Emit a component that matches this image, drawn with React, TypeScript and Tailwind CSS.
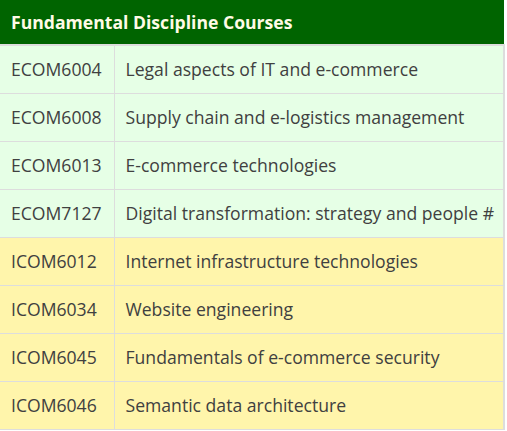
import React from 'react';

const ecom = [
  ['ECOM6004', 'Legal aspects of IT and e-commerce'],
  ['ECOM6008', 'Supply chain and e-logistics management'],
  ['ECOM6013', 'E-commerce technologies'],
  ['ECOM7127', 'Digital transformation: strategy and people #'],
];

const icom = [
  ['ICOM6012', 'Internet infrastructure technologies'],
  ['ICOM6034', 'Website engineering'],
  ['ICOM6045', 'Fundamentals of e-commerce security'],
  ['ICOM6046', 'Semantic data architecture'],
];

const App = () => {
  return (
    <div className="w-[507px] h-[431px] bg-white font-['Open_Sans',sans-serif] text-[#404040]">
      <table className="w-[505px] table-fixed border-collapse">
        <colgroup>
          <col className="w-[114px]" />
          <col />
        </colgroup>
        <thead>
          <tr className="bg-[#006400] border-b-2 border-[#dddddd]">
            <th colSpan={2} className="h-[45px] px-[11px] text-left text-[17.6px] font-bold text-[#fffbe6]">
              Fundamental Discipline Courses
            </th>
          </tr>
        </thead>
        <tbody>
          {ecom.map(([code, name]) => (
            <tr key={code} className="bg-[#e6ffe6] border-b border-r-2 border-[#dddddd]">
              <td className="h-[48px] px-[11px] text-[17.6px] whitespace-nowrap border-r border-[#dddddd]">{code}</td>
              <td className="h-[48px] pl-[11px] pr-0 text-[17.6px] whitespace-nowrap">{name}</td>
            </tr>
          ))}
          {icom.map(([code, name]) => (
            <tr key={code} className="bg-[#fff5ab] border-b border-r-2 border-[#dddddd]">
              <td className="h-[48px] px-[11px] text-[17.6px] whitespace-nowrap border-r border-[#dddddd]">{code}</td>
              <td className="h-[48px] pl-[11px] pr-0 text-[17.6px] whitespace-nowrap">{name}</td>
            </tr>
          ))}
        </tbody>
      </table>
    </div>
  );
};

export default App;
